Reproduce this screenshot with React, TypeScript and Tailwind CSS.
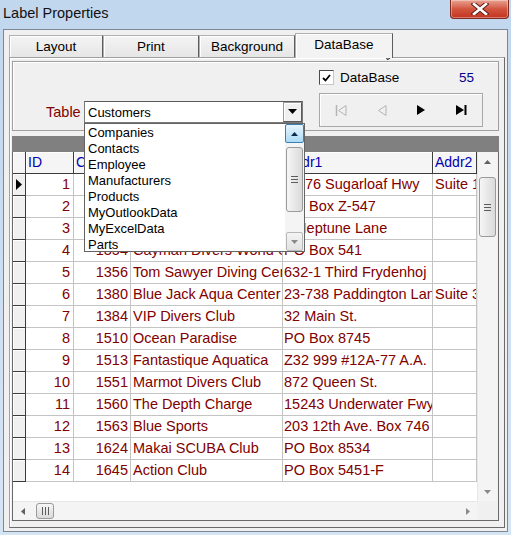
import React from 'react';

type Row = [number, number, string, string, string];

const rows: Row[] = [
  [1, 1221, 'Kauai Dive Shoppe', '4-976 Sugarloaf Hwy', 'Suite 103'],
  [2, 1231, 'Unisco', 'PO Box Z-547', ''],
  [3, 1351, 'Sight Diver', '1 Neptune Lane', ''],
  [4, 1354, 'Cayman Divers World Unlimited', 'PO Box 541', ''],
  [5, 1356, 'Tom Sawyer Diving Centre', '632-1 Third Frydenhoj', ''],
  [6, 1380, 'Blue Jack Aqua Center', '23-738 Paddington Lane', 'Suite 310'],
  [7, 1384, 'VIP Divers Club', '32 Main St.', ''],
  [8, 1510, 'Ocean Paradise', 'PO Box 8745', ''],
  [9, 1513, 'Fantastique Aquatica', 'Z32 999 #12A-77 A.A.', ''],
  [10, 1551, 'Marmot Divers Club', '872 Queen St.', ''],
  [11, 1560, 'The Depth Charge', '15243 Underwater Fwy.', ''],
  [12, 1563, 'Blue Sports', '203 12th Ave. Box 746', ''],
  [13, 1624, 'Makai SCUBA Club', 'PO Box 8534', ''],
  [14, 1645, 'Action Club', 'PO Box 5451-F', ''],
];

const tables = ['Companies', 'Contacts', 'Employee', 'Manufacturers', 'Products', 'MyOutlookData', 'MyExcelData', 'Parts'];

const tabs = [
  { label: 'Layout', w: 'w-[94px]' },
  { label: 'Print', w: 'w-[96px]' },
  { label: 'Background', w: 'w-[96px]' },
];

const Tri = ({ dir, color = '#606060' }: { dir: 'up' | 'down' | 'left' | 'right'; color?: string }) => {
  const pts = {
    up: '0,4 7,4 3.5,0',
    down: '0,0 7,0 3.5,4',
    left: '4,0 4,7 0,3.5',
    right: '0,0 0,7 4,3.5',
  }[dir];
  const vertical = dir === 'up' || dir === 'down';
  return (
    <svg width={vertical ? 7 : 4} height={vertical ? 4 : 7} viewBox={vertical ? '0 0 7 4' : '0 0 4 7'}>
      <polygon points={pts} fill={color} />
    </svg>
  );
};

const Grip = ({ vertical }: { vertical: boolean }) => (
  <div className={vertical ? 'flex flex-col gap-[2px]' : 'flex gap-[2px]'}>
    {[0, 1, 2].map((i) => (
      <div key={i} className={vertical ? 'h-px w-[7px] bg-[#5c5c5c]' : 'h-[8px] w-px bg-[#5c5c5c]'} />
    ))}
  </div>
);

const VScroll = () => (
  <div className="flex h-[349px] w-[20px] flex-col items-center border-l border-[#e6e6e6] bg-[#f4f4f4]">
    <div className="flex h-[19px] items-center justify-center">
      <Tri dir="up" />
    </div>
    <div className="mt-[6px] flex h-[60px] w-[17px] items-center justify-center rounded-[3px] border border-[#9a9a9a] bg-gradient-to-r from-[#f6f6f6] to-[#dadada]">
      <Grip vertical />
    </div>
    <div className="flex-1" />
    <div className="flex h-[19px] items-center justify-center">
      <Tri dir="down" color="#8a8a8a" />
    </div>
  </div>
);

const HScroll = () => (
  <div className="flex h-[19px] w-[464px] items-center border-t border-[#e6e6e6] bg-[#f4f4f4]">
    <div className="flex w-[19px] justify-center">
      <Tri dir="left" />
    </div>
    <div className="ml-[4px] flex h-[16px] w-[18px] items-center justify-center rounded-[3px] border border-[#9a9a9a] bg-gradient-to-b from-[#f6f6f6] to-[#dadada]">
      <Grip vertical={false} />
    </div>
    <div className="flex-1" />
    <div className="flex w-[19px] justify-center">
      <Tri dir="right" color="#8a8a8a" />
    </div>
  </div>
);

const NavIcon = ({ kind }: { kind: 'first' | 'prev' | 'next' | 'last' }) => {
  if (kind === 'first')
    return (
      <svg width="12" height="11" viewBox="0 0 12 11">
        <line x1="1.5" y1="0" x2="1.5" y2="11" stroke="#b4b4b4" strokeWidth="1.5" />
        <polygon points="11,0.5 11,10.5 3.5,5.5" fill="none" stroke="#b4b4b4" />
      </svg>
    );
  if (kind === 'prev')
    return (
      <svg width="10" height="11" viewBox="0 0 10 11">
        <polygon points="9,0.5 9,10.5 1.5,5.5" fill="none" stroke="#b4b4b4" />
      </svg>
    );
  if (kind === 'next')
    return (
      <svg width="9" height="10" viewBox="0 0 9 10">
        <polygon points="0,0 0,10 8,5" fill="#000" />
      </svg>
    );
  return (
    <svg width="11" height="10" viewBox="0 0 11 10">
      <polygon points="0,0 0,10 8,5" fill="#000" />
      <rect x="8.5" y="0" width="2" height="10" fill="#000" />
    </svg>
  );
};

const headerCell = 'flex h-[22px] shrink-0 items-center overflow-hidden whitespace-nowrap border-r border-b border-[#3c3c3c] bg-[#f5f5f5] pl-[2px] text-[#0000b0] shadow-[inset_1px_1px_0_#ffffff]';
const dataCell = 'flex h-[22px] shrink-0 items-center overflow-hidden whitespace-nowrap border-r border-b border-[#c4c4c4] bg-white pt-px';

export default function App() {
  return (
    <div className="relative h-[535px] w-[511px] overflow-hidden bg-gradient-to-b from-[#c1d7ee] to-[#d6e5f4] font-['Liberation_Sans',Arial,sans-serif] text-black">
      {/* title bar */}
      <div className="flex h-[29px] items-start">
        <span className="pl-[3px] pt-[4px] text-[14.5px] leading-[18px] text-[#111]">Label Properties</span>
        <div className="ml-auto mr-[2px] flex h-[19px] w-[59px] items-center justify-center rounded-b-[4px] border border-t-0 border-[#7c2a22] bg-gradient-to-b from-[#e8a293] via-[#d2553f] to-[#c2321f] shadow-[inset_0_0_0_1px_rgba(255,255,255,0.35)]">
          <svg width="18" height="12" viewBox="0 0 18 12">
            <path d="M3 1 L15 11 M15 1 L3 11" stroke="#5a1a12" strokeWidth="4.5" strokeLinecap="square" />
            <path d="M3 1 L15 11 M15 1 L3 11" stroke="#ffffff" strokeWidth="2.6" strokeLinecap="square" />
          </svg>
        </div>
      </div>

      {/* client area */}
      <div className="mx-[3px] h-[503px] border border-[#7b8794] bg-[#f0f0f0] pl-[5px] pt-[3px]">
        {/* tab strip */}
        <div className="flex h-[24px] items-end text-[13.5px]">
          {tabs.map((t) => (
            <div
              key={t.label}
              className={`flex h-[22px] ${t.w} items-center justify-center border border-b-0 border-[#b0b0b0] border-r-[#5c5c5c] bg-gradient-to-b from-[#f4f4f4] to-[#e6e6e6] pt-px shadow-[inset_1px_1px_0_#ffffff]`}
            >
              {t.label}
            </div>
          ))}
          <div className="relative z-10 -mb-px flex h-[25px] w-[98px] items-center justify-center border border-b-0 border-[#b0b0b0] border-r-[#5c5c5c] bg-[#f3f3f3] pb-[2px] shadow-[inset_1px_1px_0_#ffffff]">
            DataBase
          </div>
        </div>

        {/* tab page */}
        <div className="h-[471px] w-[496px] border border-[#a0a0a0] border-r-[#6a6a6a] border-b-[#6a6a6a] bg-[#f0f0f0] pl-[2px] pt-[3px] shadow-[inset_1px_1px_0_#ffffff]">
          {/* options panel */}
          <div className="flex h-[70px] w-[487px] items-start border border-[#a0a0a0] pl-[33px] shadow-[inset_1px_1px_0_#ffffff]">
            <div className="mt-[38px] flex items-center">
              <span className="w-[38px] pt-[2px] text-[14.5px] text-[#800000]">Table</span>
              <div className="flex h-[22px] w-[219px] items-center border border-[#7a7a7a] border-t-[#5a5a5a] bg-white">
                <span className="flex-1 pl-[3px] pt-px text-[13px]">Customers</span>
                <div className="flex h-[20px] w-[19px] items-center justify-center border border-[#9a9a9a] border-r-[#5a5a5a] border-b-[#5a5a5a] bg-[#f0f0f0] shadow-[inset_1px_1px_0_#ffffff]">
                  <svg width="9" height="5" viewBox="0 0 9 5">
                    <polygon points="0,0 9,0 4.5,5" fill="#000" />
                  </svg>
                </div>
              </div>
            </div>

            <div className="ml-[16px] pt-[8px]">
              <div className="flex h-[15px] w-[164px] items-center pr-[9px]">
                <div className="flex h-[15px] w-[15px] items-center justify-center border border-[#4a4a4a] border-r-[#c8c8c8] border-b-[#c8c8c8] bg-white">
                  <svg width="9" height="8" viewBox="0 0 9 8">
                    <path d="M1 4 L3.5 6.5 L8 1" stroke="#000" strokeWidth="1.8" fill="none" />
                  </svg>
                </div>
                <span className="ml-[6px] pt-[2px] text-[13.5px]">DataBase</span>
                <span className="ml-auto pt-[2px] text-[13.5px] text-[#00008b]">55</span>
              </div>
              <div className="mt-[8px] grid h-[34px] w-[164px] grid-cols-4 items-center border border-[#a8a8a8] shadow-[inset_1px_1px_0_#ffffff]">
                <div className="flex justify-center pl-[2px]"><NavIcon kind="first" /></div>
                <div className="flex justify-center pl-[2px]"><NavIcon kind="prev" /></div>
                <div className="flex justify-center"><NavIcon kind="next" /></div>
                <div className="flex justify-center"><NavIcon kind="last" /></div>
              </div>
            </div>
          </div>

          {/* grid */}
          <div className="mt-[5px] w-[487px]">
            <div className="h-[16px] bg-[#808080]" />
            <div className="flex h-[369px] border border-t-0 border-[#6a6a6a] text-[14.5px]">
              <div className="w-[464px]">
                <div className="flex text-[14px]">
                  <div className={`${headerCell} w-[13px]`} />
                  <div className={`${headerCell} w-[48px]`}>ID</div>
                  <div className={`${headerCell} w-[57px]`}>CustNo</div>
                  <div className={`${headerCell} w-[152px]`}>Company</div>
                  <div className={`${headerCell} w-[150px]`}>Addr1</div>
                  <div className={`${headerCell} w-[44px]`}>Addr2</div>
                </div>
                {rows.map(([id, no, company, a1, a2], i) => (
                  <div key={id} className="flex text-[#800000]">
                    <div className="flex h-[22px] w-[13px] shrink-0 items-center justify-center border-r border-b border-[#3c3c3c] bg-[#f0f0f0] shadow-[inset_1px_1px_0_#ffffff]">
                      {i === 0 && (
                        <svg width="6" height="11" viewBox="0 0 6 11">
                          <polygon points="0,0 0,11 6,5.5" fill="#000" />
                        </svg>
                      )}
                    </div>
                    <div className={`${dataCell} w-[48px] justify-end pr-[3px]`}>{id}</div>
                    <div className={`${dataCell} w-[57px] justify-end pr-[2px]`}>{no}</div>
                    <div className={`${dataCell} w-[152px] pl-[2px]`}>{company}</div>
                    <div className={`${dataCell} w-[150px] pl-[1px]`}>{a1}</div>
                    <div className={`${dataCell} w-[44px] pl-[2px]`}>{a2}</div>
                  </div>
                ))}
                <div className="h-[19px] bg-white" />
                <HScroll />
              </div>
              <div className="flex flex-col">
                <VScroll />
                <div className="h-[19px] w-[20px] bg-[#f0f0f0]" />
              </div>
            </div>
          </div>
        </div>
      </div>

      {/* open dropdown list */}
      <div className="absolute left-[84px] top-[123px] flex h-[129px] w-[221px] border border-[#646464] bg-white text-[13px]">
        <div className="flex-1 pl-[3px] pt-px">
          {tables.map((t) => (
            <div key={t} className="h-[16px] leading-[16px]">
              {t}
            </div>
          ))}
        </div>
        <div className="flex w-[19px] flex-col items-center bg-[#f4f4f4]">
          <div className="flex h-[19px] w-[19px] items-center justify-center rounded-[2px] border border-[#3c7fb1] bg-gradient-to-b from-[#e8f5fc] to-[#a9daf5]">
            <Tri dir="up" color="#0d2a4e" />
          </div>
          <div className="mt-[4px] flex h-[65px] w-[17px] items-center justify-center rounded-[3px] border border-[#9a9a9a] bg-gradient-to-r from-[#f6f6f6] to-[#dadada]">
            <Grip vertical />
          </div>
          <div className="flex-1" />
          <div className="flex h-[19px] w-[17px] items-center justify-center rounded-[2px] border border-[#b8b8b8] bg-gradient-to-b from-[#f4f4f4] to-[#e2e2e2]">
            <Tri dir="down" color="#8a8a8a" />
          </div>
        </div>
      </div>

      {/* mouse pointer */}
      <svg className="absolute left-[380px] top-[40px]" width="13" height="22" viewBox="0 0 13 22">
        <path d="M0.5 0.5 L0.5 16.5 L4.5 12.8 L7.3 19.5 L9.6 18.5 L6.9 12 L12 12 Z" fill="#fff" stroke="#000" strokeWidth="1" />
      </svg>
    </div>
  );
}
